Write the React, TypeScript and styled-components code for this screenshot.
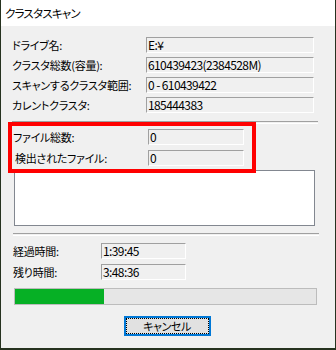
import React from "react";
import styled, { createGlobalStyle } from "styled-components";

const Global = createGlobalStyle`
  html, body { margin: 0; padding: 0; background: #26321f; }
  body { width: 336px; height: 350px; overflow: hidden; }
`;

const FONT = `"Noto Sans CJK JP", "Noto Sans", sans-serif`;

const Window = styled.div`
  position: relative;
  box-sizing: border-box;
  margin-left: 1px;
  width: 334px;
  height: 348px;
  background: #f0f0f0;
  font-family: ${FONT};
  font-size: 11px;
  font-feature-settings: "palt";
  color: #000;
  display: flex;
  flex-direction: column;
`;

const TitleBar = styled.div`
  height: 26px;
  background: #fff;
  display: flex;
  align-items: center;
  padding-left: 4px;
  font-size: 11.5px;
  letter-spacing: -0.8px;
`;

const Body = styled.div`
  display: flex;
  flex-direction: column;
  padding: 11px 0 0 0;
`;

const Rows = styled.div<{ $gap: number; $left: number; $top?: number }>`
  display: flex;
  flex-direction: column;
  gap: ${(p) => p.$gap}px;
  padding-left: ${(p) => p.$left}px;
  margin-top: ${(p) => p.$top ?? 0}px;
`;

const Row = styled.div<{ $labelW: number }>`
  display: grid;
  grid-template-columns: ${(p) => p.$labelW}px auto;
  align-items: center;
  height: 16px;
`;

const Label = styled.span<{ $indent?: number }>`
  padding-left: ${(p) => p.$indent ?? 0}px;
  white-space: nowrap;
  line-height: 16px;
  font-size: 11px;
  letter-spacing: -0.25px;
`;

const Field = styled.div<{ $w: number }>`
  box-sizing: border-box;
  width: ${(p) => p.$w}px;
  height: 16px;
  border-top: 1px solid #a0a0a0;
  border-left: 1px solid #a0a0a0;
  border-bottom: 1px solid #fff;
  border-right: 1px solid #fff;
  padding-left: 1px;
  line-height: 14px;
  font-size: 12px;
  font-feature-settings: normal;
  letter-spacing: -0.6px;
  white-space: nowrap;
  overflow: hidden;
`;

const Separator = styled.div<{ $top: number; $left: number; $w: number }>`
  margin-top: ${(p) => p.$top}px;
  margin-left: ${(p) => p.$left}px;
  width: ${(p) => p.$w}px;
  height: 1px;
  border-top: 1px solid #a0a0a0;
  border-bottom: 1px solid #fff;
`;

const ListBox = styled.div`
  box-sizing: border-box;
  margin: 4px 0 0 13px;
  width: 301px;
  height: 56px;
  background: #fff;
  border: 1px solid #828790;
`;

const Progress = styled.div`
  box-sizing: border-box;
  margin: 8px 0 0 13px;
  width: 303px;
  height: 17px;
  background: #e6e6e6;
  border: 1px solid #bcbcbc;
  display: flex;
`;

const ProgressFill = styled.div`
  height: 100%;
  background: #06b025;
`;

const ButtonRow = styled.div`
  display: flex;
  justify-content: center;
  margin-top: 11px;
`;

const Button = styled.button`
  box-sizing: border-box;
  width: 87px;
  height: 20px;
  margin-left: -2px;
  padding: 0;
  background: #e1e1e1;
  border: 2px solid #0078d7;
  font-family: ${FONT};
  font-size: 11px;
  letter-spacing: -0.4px;
  font-feature-settings: "palt";
  color: #000;
  display: flex;
  align-items: stretch;
  justify-content: stretch;
`;

const FocusRect = styled.span`
  flex: 1;
  border: 1px dotted #000;
  display: flex;
  align-items: center;
  justify-content: center;
  line-height: 14px;
`;

const Highlight = styled.div`
  position: absolute;
  left: 7px;
  top: 122px;
  width: 248px;
  height: 51px;
  box-sizing: border-box;
  border: 4px solid #ff0000;
  pointer-events: none;
`;

export default function App() {
  const info = [
    ["ドライブ名:", "E:¥"],
    ["クラスタ総数(容量):", "610439423(2384528M)"],
    ["スキャンするクラスタ範囲:", "0 - 610439422"],
    ["カレントクラスタ:", "185444383"],
  ];
  const progress = 0.297;
  return (
    <>
      <Global />
      <Window>
        <TitleBar>クラスタスキャン</TitleBar>
        <Body>
          <Rows $gap={4} $left={11}>
            {info.map(([l, v]) => (
              <Row key={l} $labelW={134}>
                <Label>{l}</Label>
                <Field $w={168}>{v}</Field>
              </Row>
            ))}
          </Rows>
          <Separator $top={8} $left={11} $w={306} />
          <Rows $gap={5} $left={12} $top={5}>
            <Row $labelW={135}>
              <Label>ファイル総数:</Label>
              <Field $w={96}>0</Field>
            </Row>
            <Row $labelW={135}>
              <Label $indent={2}>検出されたファイル:</Label>
              <Field $w={96}>0</Field>
            </Row>
          </Rows>
          <ListBox />
          <Separator $top={7} $left={12} $w={306} />
          <Rows $gap={5} $left={12} $top={7}>
            <Row $labelW={88}>
              <Label>経過時間:</Label>
              <Field $w={85}>1:39:45</Field>
            </Row>
            <Row $labelW={88}>
              <Label>残り時間:</Label>
              <Field $w={85}>3:48:36</Field>
            </Row>
          </Rows>
          <Progress>
            <ProgressFill style={{ width: `${progress * 100}%` }} />
          </Progress>
          <ButtonRow>
            <Button>
              <FocusRect>キャンセル</FocusRect>
            </Button>
          </ButtonRow>
        </Body>
        <Highlight />
      </Window>
    </>
  );
}
